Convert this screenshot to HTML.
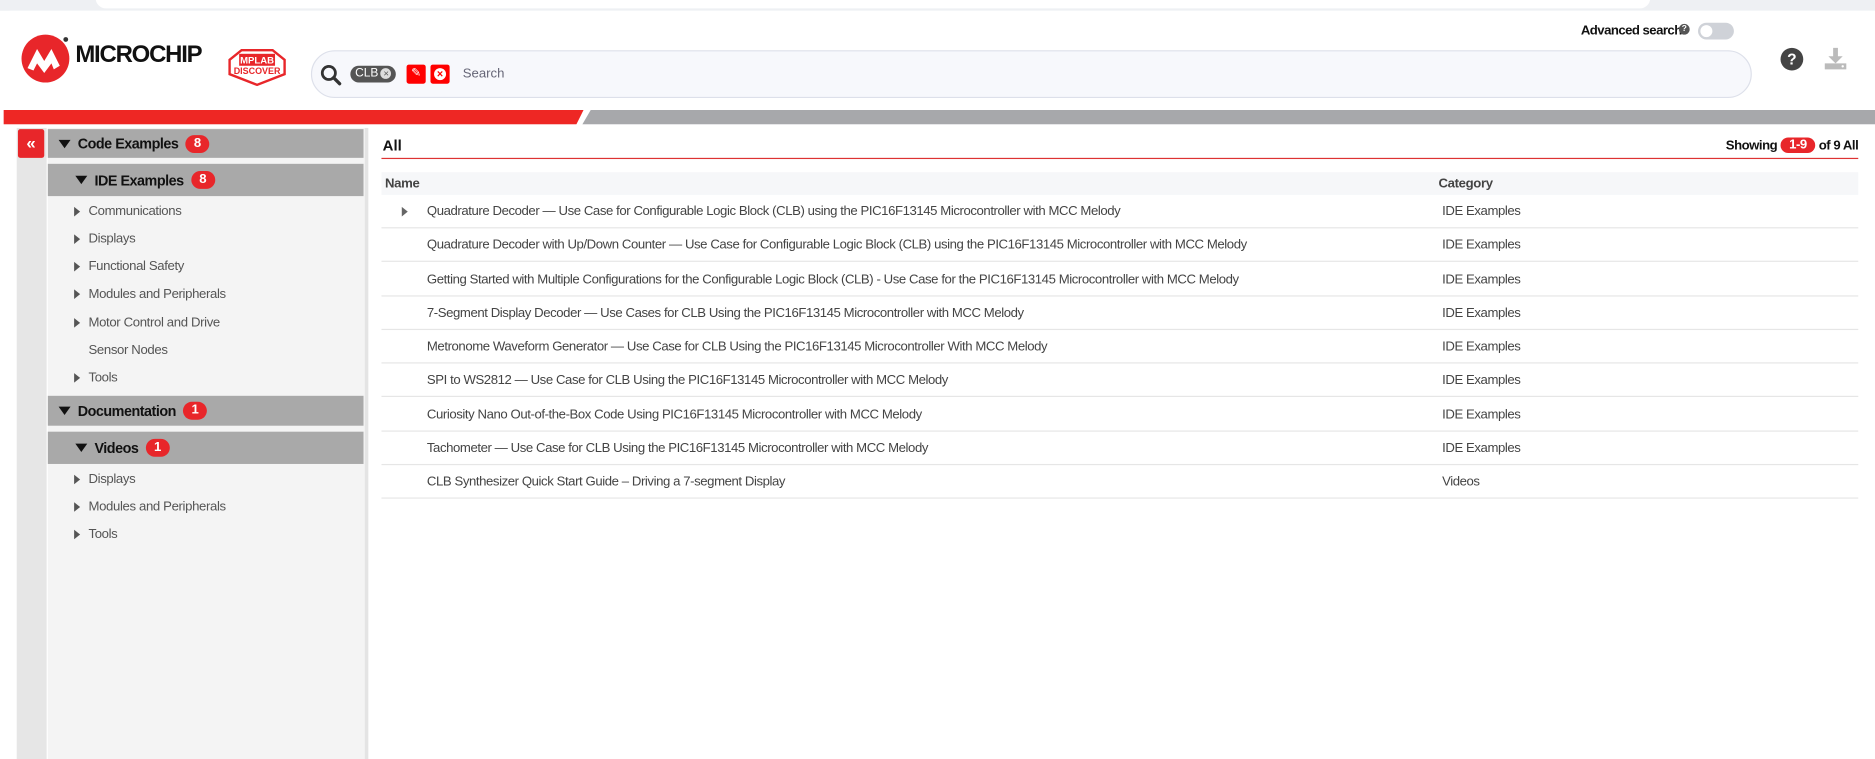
<!DOCTYPE html>
<html><head><meta charset="utf-8"><style>
*{box-sizing:border-box;margin:0;padding:0}
html,body{width:1875px;height:759px;overflow:hidden;background:#fff}
#w{width:1568px;height:635px;transform:scale(1.19579);transform-origin:0 0;position:relative;font-family:"Liberation Sans",sans-serif;color:#333}
.a{position:absolute}
.hdr{background:#a9a9a9;position:absolute;left:40px;width:264px;font-weight:bold;font-size:12px;letter-spacing:-.4px;color:#111;display:flex;align-items:center}
.tri{width:0;height:0;border-left:5px solid transparent;border-right:5px solid transparent;border-top:7px solid #111;margin-right:6px}
.badge{background:#e8262a;color:#fff;border-radius:8px;font-size:11px;font-weight:bold;padding:1px 7px;margin-left:6px;line-height:13px;letter-spacing:0}
.it{position:absolute;left:62px;font-size:11px;color:#555;letter-spacing:-.3px;display:flex;align-items:center;height:14px}
.rt{width:0;height:0;border-top:4px solid transparent;border-bottom:4px solid transparent;border-left:5px solid #555;margin-right:7px}
.row{position:absolute;left:319px;width:1235px;height:28px;border-bottom:1px solid #e6e6e6;font-size:11px;color:#444;letter-spacing:-.35px}
.row span{position:absolute;top:8px}
</style></head><body><div id="w">
<div class="a" style="left:0;top:0;width:1568px;height:9px;background:#eef0f3"></div>
<div class="a" style="left:80px;top:-10px;width:1300px;height:17px;background:#fff;border-radius:9px"></div>
<div class="a" style="left:3px;top:9px;width:1565px;height:630px;background:#fff;border-radius:6px 0 0 0"></div>
<svg class="a" style="left:17px;top:27px" width="44" height="44" viewBox="0 0 44 44"><circle cx="21" cy="22" r="20" fill="#e8262a"/><path d="M6 30 L14 14 L20 24 L26 14 L33 28 L28 31 L26 26 L20 34 L14 26 L11 32Z" fill="#fff"/><circle cx="38" cy="6" r="2" fill="#333"/></svg>
<div class="a" style="left:63px;top:35px;font-size:20px;font-weight:bold;color:#111;letter-spacing:-1px">MICROCHIP</div>
<svg class="a" style="left:190px;top:40px" width="50" height="32" viewBox="0 0 50 32"><path d="M12 2 L38 2 L48 10 L48 22 L25 31 L2 22 L2 10Z" fill="#fff" stroke="#e8262a" stroke-width="2"/><rect x="10" y="5" width="30" height="10" fill="#e8262a"/><text x="25" y="13" font-size="8" font-weight="bold" fill="#fff" text-anchor="middle" font-family="Liberation Sans">MPLAB</text><text x="25" y="22" font-size="7.5" font-weight="bold" fill="#e8262a" text-anchor="middle" font-family="Liberation Sans">DISCOVER</text></svg>
<div class="a" style="left:260px;top:42px;width:1205px;height:40px;background:#f7f8fc;border:1px solid #dde0ea;border-radius:20px"></div>
<svg class="a" style="left:267px;top:53px" width="20" height="20" viewBox="0 0 20 20"><circle cx="8" cy="8" r="5.5" fill="none" stroke="#333" stroke-width="2.3"/><path d="M12 12 L17 17" stroke="#333" stroke-width="2.8" stroke-linecap="round"/></svg>
<div class="a" style="left:293px;top:55px;width:38px;height:14px;background:#555;border-radius:7px;color:#fff;font-size:10px;line-height:14px;padding-left:4px">CLB<span style="display:inline-block;width:9px;height:9px;border-radius:50%;background:#ddd;color:#555;font-size:8px;line-height:9px;text-align:center;margin-left:2px;vertical-align:0">×</span></div>
<div class="a" style="left:340px;top:54px;width:16px;height:16px;background:#f00;border-radius:2px;color:#fff;font-size:10px;text-align:center;line-height:16px">✎</div>
<div class="a" style="left:360px;top:54px;width:16px;height:16px;background:#f00;border-radius:2px"><div style="margin:3px;width:10px;height:10px;border-radius:50%;background:#fff;color:#f00;font-size:9px;line-height:10px;text-align:center;font-weight:bold">×</div></div>
<div class="a" style="left:387px;top:56px;font-size:11px;color:#667">Search</div>
<div class="a" style="left:1322px;top:20px;font-size:11px;font-weight:bold;color:#111;letter-spacing:-.45px">Advanced search</div>
<div class="a" style="left:1404px;top:20px;width:9px;height:9px;border-radius:50%;background:#555;color:#fff;font-size:7px;line-height:9px;text-align:center;font-weight:bold">?</div>
<div class="a" style="left:1420px;top:19px;width:30px;height:14px;border-radius:7px;background:#cfd2d8"><div style="margin:2px;width:10px;height:10px;border-radius:50%;background:#fff"></div></div>
<div class="a" style="left:1489px;top:40px;width:19px;height:19px;border-radius:50%;background:#444;color:#fff;font-size:13px;font-weight:bold;text-align:center;line-height:19px">?</div>
<svg class="a" style="left:1525px;top:39px" width="20" height="20" viewBox="0 0 20 20"><path d="M8 1 H12 V8 H16 L10 14 L4 8 H8Z" fill="#bbb"/><rect x="1" y="14" width="18" height="5" fill="#bbb"/><circle cx="16" cy="16.5" r="1" fill="#fff"/></svg>
<svg class="a" style="left:3px;top:92px" width="1565" height="12"><polygon points="0,0 485,0 479,12 0,12" fill="#ee2724"/><polygon points="491,0 1565,0 1565,12 484,12" fill="#a7a8ab"/></svg>
<div class="a" style="left:14px;top:107px;width:25px;height:530px;background:#e6e6e6"></div>
<div class="a" style="left:15px;top:108px;width:22px;height:24px;background:#e8262a;border-radius:2px;color:#fff;font-weight:bold;font-size:14px;text-align:center;line-height:22px">«</div>
<div class="a" style="left:40px;top:107px;width:265px;height:530px;background:#f4f4f4"></div>
<div class="a" style="left:305px;top:107px;width:3px;height:530px;background:#e4e4e4"></div>
<div class="hdr" style="top:108px;height:24px;padding-left:9px"><div class="tri"></div>Code Examples<span class="badge">8</span></div>
<div class="hdr" style="top:137px;height:27px;padding-left:23px"><div class="tri"></div>IDE Examples<span class="badge">8</span></div>
<div class="it" style="top:170px"><div class="rt"></div>Communications</div>
<div class="it" style="top:193px"><div class="rt"></div>Displays</div>
<div class="it" style="top:216px"><div class="rt"></div>Functional Safety</div>
<div class="it" style="top:239px"><div class="rt"></div>Modules and Peripherals</div>
<div class="it" style="top:263px"><div class="rt"></div>Motor Control and Drive</div>
<div class="it" style="top:286px;left:74px">Sensor Nodes</div>
<div class="it" style="top:309px"><div class="rt"></div>Tools</div>
<div class="hdr" style="top:331px;height:25px;padding-left:9px"><div class="tri"></div>Documentation<span class="badge">1</span></div>
<div class="hdr" style="top:361px;height:27px;padding-left:23px"><div class="tri"></div>Videos<span class="badge">1</span></div>
<div class="it" style="top:394px"><div class="rt"></div>Displays</div>
<div class="it" style="top:417px"><div class="rt"></div>Modules and Peripherals</div>
<div class="it" style="top:440px"><div class="rt"></div>Tools</div>
<div class="a" style="left:320px;top:115px;font-size:12.5px;font-weight:bold;color:#111">All</div>
<div class="a" style="right:14px;top:115px;font-size:11px;font-weight:bold;color:#111;display:flex;align-items:center;letter-spacing:-.4px">Showing<span style="background:#e8262a;color:#fff;border-radius:7px;padding:0 7px;margin:0 3px;line-height:13px">1-9</span>of 9 All</div>
<div class="a" style="left:319px;top:132px;width:1235px;height:1px;background:#d33"></div>
<div class="a" style="left:319px;top:144px;width:1235px;height:19px;background:#f6f7f9"></div>
<div class="a" style="left:322px;top:148px;font-size:11px;font-weight:bold;color:#444;letter-spacing:-.3px">Name</div>
<div class="a" style="left:1203px;top:148px;font-size:11px;font-weight:bold;color:#444;letter-spacing:-.3px">Category</div>
<div class="row" style="top:163px"><div class="rt" style="position:absolute;left:17px;top:10px;border-left-color:#666"></div><span style="left:38px">Quadrature Decoder — Use Case for Configurable Logic Block (CLB) using the PIC16F13145 Microcontroller with MCC Melody</span><span style="left:887px">IDE Examples</span></div>
<div class="row" style="top:191px"><span style="left:38px">Quadrature Decoder with Up/Down Counter — Use Case for Configurable Logic Block (CLB) using the PIC16F13145 Microcontroller with MCC Melody</span><span style="left:887px">IDE Examples</span></div>
<div class="row" style="top:220px"><span style="left:38px">Getting Started with Multiple Configurations for the Configurable Logic Block (CLB) - Use Case for the PIC16F13145 Microcontroller with MCC Melody</span><span style="left:887px">IDE Examples</span></div>
<div class="row" style="top:248px"><span style="left:38px">7-Segment Display Decoder — Use Cases for CLB Using the PIC16F13145 Microcontroller with MCC Melody</span><span style="left:887px">IDE Examples</span></div>
<div class="row" style="top:276px"><span style="left:38px">Metronome Waveform Generator — Use Case for CLB Using the PIC16F13145 Microcontroller With MCC Melody</span><span style="left:887px">IDE Examples</span></div>
<div class="row" style="top:304px"><span style="left:38px">SPI to WS2812 — Use Case for CLB Using the PIC16F13145 Microcontroller with MCC Melody</span><span style="left:887px">IDE Examples</span></div>
<div class="row" style="top:333px"><span style="left:38px">Curiosity Nano Out-of-the-Box Code Using PIC16F13145 Microcontroller with MCC Melody</span><span style="left:887px">IDE Examples</span></div>
<div class="row" style="top:361px"><span style="left:38px">Tachometer — Use Case for CLB Using the PIC16F13145 Microcontroller with MCC Melody</span><span style="left:887px">IDE Examples</span></div>
<div class="row" style="top:389px"><span style="left:38px">CLB Synthesizer Quick Start Guide – Driving a 7-segment Display</span><span style="left:887px">Videos</span></div>
</div></body></html>
